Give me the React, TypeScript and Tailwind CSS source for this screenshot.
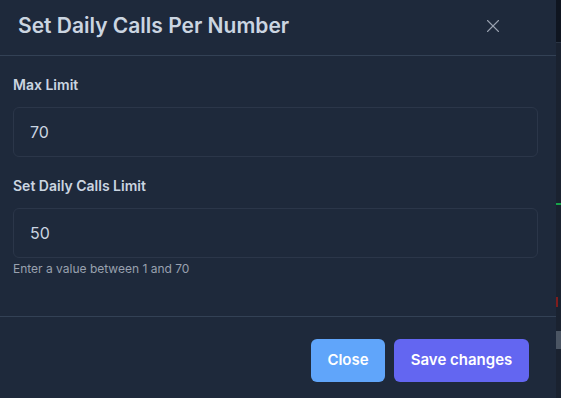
import React, { useState } from "react";
import { X } from "lucide-react";

const DailyCallsModal = () => {
  const [maxLimit] = useState("70");
  const [dailyLimit, setDailyLimit] = useState("50");

  return (
    <div className="w-[561px] h-[398px] flex overflow-hidden bg-[#111827] font-['Inter',sans-serif]">
      <div className="w-[556px] flex flex-col bg-[#1e293b]">
        {/* header */}
        <div className="h-[56px] flex items-center justify-between pl-[18px] pr-[52px] pb-[4px] border-b border-[#334155]">
          <h2 className="text-[21px] leading-7 font-semibold text-[#cbd5e1]">
            Set Daily Calls Per Number
          </h2>
          <button className="text-gray-400 hover:text-gray-200">
            <X className="w-[22px] h-[22px]" strokeWidth={1.2} />
          </button>
        </div>

        {/* body */}
        <div className="flex-1 px-[13px] pt-[19px] pr-[18px]">
          <label className="block text-[14px] leading-5 font-semibold text-[#cbd5e1] mb-[12px]">
            Max Limit
          </label>
          <input
            value={maxLimit}
            readOnly
            className="w-full h-[50px] px-[16px] rounded-md border border-[#2b3649] bg-[#1e293b] text-[16px] text-[#cbd5e1] outline-none"
          />

          <label className="block mt-[19px] text-[14px] leading-5 font-semibold text-[#cbd5e1] mb-[12px]">
            Set Daily Calls Limit
          </label>
          <input
            value={dailyLimit}
            onChange={(e) => setDailyLimit(e.target.value)}
            className="w-full h-[50px] px-[16px] rounded-md border border-[#2b3649] bg-[#1e293b] text-[16px] text-[#cbd5e1] outline-none"
          />
          <p className="mt-[3px] text-[12px] leading-4 text-gray-400">
            Enter a value between 1 and 70
          </p>
        </div>

        {/* footer */}
        <div className="h-[82px] flex items-start justify-end gap-[9px] pt-[22px] pr-[27px] border-t border-[#334155]">
          <button className="w-[74px] h-[43px] rounded-md bg-[#60a5fa] text-white text-[15px] font-semibold">
            Close
          </button>
          <button className="w-[135px] h-[43px] rounded-md bg-[#6366f1] text-white text-[15px] font-semibold">
            Save changes
          </button>
        </div>
      </div>

      {/* sliver of the page behind */}
      <div className="flex-1 flex flex-col">
        <div className="h-[43px] bg-[#0f1520] border-b border-[#2a3444]" />
        <div className="flex-1 flex flex-col bg-[#1a2230]">
          <div className="h-[160px]" />
          <div className="h-[2px] bg-[#16a34a]" />
          <div className="h-[92px]" />
          <div className="h-[10px] w-[2px] bg-[#7f1d1d]" />
          <div className="h-[24px]" />
          <div className="h-[18px] bg-[#4b5563]" />
        </div>
      </div>
    </div>
  );
};

export default function App() {
  return <DailyCallsModal />;
}
